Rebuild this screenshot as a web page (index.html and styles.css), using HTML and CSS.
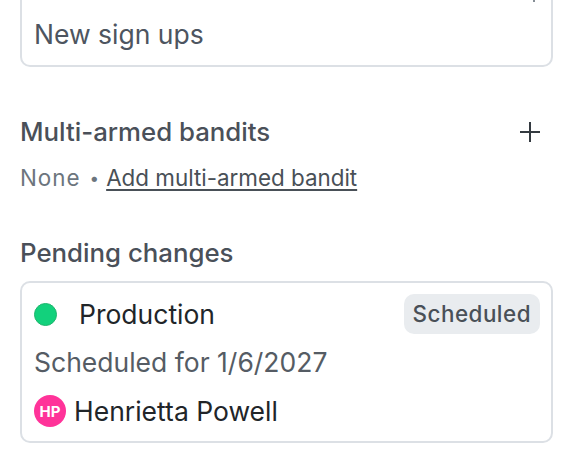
FILE: index.html
```html
<!DOCTYPE html>
<html>
<head>
<meta charset="utf-8">
<link rel="stylesheet" href="styles.css">
</head>
<body>
<div class="page">
  <div class="card card-top">
    <span class="peek"></span>
    <div class="metric">New sign ups</div>
  </div>

  <section class="section bandits">
    <div class="section-head">
      <h2 class="title">Multi-armed bandits</h2>
      <button class="add-btn" aria-label="Add">
        <svg width="22" height="22" viewBox="0 0 22 22"><path d="M11 1v20M1 11h20" stroke="#343a40" stroke-width="2" fill="none"/></svg>
      </button>
    </div>
    <div class="meta"><span class="none">None</span><span class="dot">•</span><a class="link" href="#">Add multi-armed bandit</a></div>
  </section>

  <section class="section pending">
    <h2 class="title">Pending changes</h2>
    <div class="card change">
      <div class="change-head">
        <span class="env-dot"></span>
        <span class="env">Production</span>
        <span class="badge">Scheduled</span>
      </div>
      <div class="when">Scheduled for 1/6/2027</div>
      <div class="user"><span class="avatar">HP</span><span class="name">Henrietta Powell</span></div>
    </div>
  </section>
</div>
</body>
</html>
```
FILE: styles.css
```css
html, body {
  margin: 0;
  padding: 0;
  background: #ffffff;
}
body {
  font-family: Inter, "Noto Sans", sans-serif;
  color: #4a5059;
}
.page {
  padding: 0 15px 0 20px;
}
.card {
  border: 2px solid #dce0e5;
  border-radius: 10px;
  background: #fff;
}
.card-top {
  position: relative;
  margin-top: -40px;
  padding: 56px 12px 15px;
}
.peek {
  position: absolute;
  right: 16px;
  top: 38px;
  width: 2px;
  height: 2px;
  background: #868e96;
}
.metric {
  font-size: 26.5px;
  line-height: 32px;
  color: #4d5560;
}
.section-head {
  display: flex;
  align-items: center;
  justify-content: space-between;
}
.title {
  margin: 0;
  font-size: 25.8px;
  font-weight: 500;
  line-height: 32px;
  color: #4a5059;
}
.bandits {
  margin-top: 49px;
}
.add-btn {
  border: 0;
  background: none;
  padding: 0;
  margin-right: 12px;
  display: flex;
}
.meta {
  margin-top: 16px;
  font-size: 22.4px;
  line-height: 28px;
  display: flex;
  align-items: center;
  color: #6c757d;
}
.none {
  letter-spacing: 1px;
}
.dot {
  margin: 0 7px 0 9px;
  font-size: 17px;
}
.link {
  color: #495057;
  text-decoration: underline;
  text-decoration-thickness: 2px;
  text-underline-offset: 3px;
}
.pending {
  margin-top: 45px;
}
.change {
  margin-top: 12px;
  padding: 11px 11px 14px 12px;
}
.change-head {
  display: flex;
  align-items: center;
}
.env-dot {
  box-sizing: border-box;
  width: 23px;
  height: 23px;
  border-radius: 50%;
  background: #12d17c;
  border: 1.5px solid #1fb56d;
}
.env {
  margin-left: 22px;
  font-size: 26.5px;
  line-height: 32px;
  color: #212529;
  flex: 1;
}
.badge {
  background: #e9ecef;
  border-radius: 10px;
  padding: 6px 9px;
  font-size: 22.4px;
  line-height: 28px;
  font-weight: 500;
  letter-spacing: 0.5px;
  color: #495057;
}
.when {
  margin-top: 12px;
  font-size: 26.5px;
  line-height: 32px;
  color: #555c64;
}
.user {
  margin-top: 17px;
  display: flex;
  align-items: center;
}
.avatar {
  width: 32px;
  height: 32px;
  border-radius: 50%;
  background: #ff3399;
  color: #fff;
  font-size: 15px;
  font-weight: 700;
  display: flex;
  align-items: center;
  justify-content: center;
}
.name {
  margin-left: 8px;
  font-size: 26.5px;
  line-height: 32px;
  color: #212529;
}
```
